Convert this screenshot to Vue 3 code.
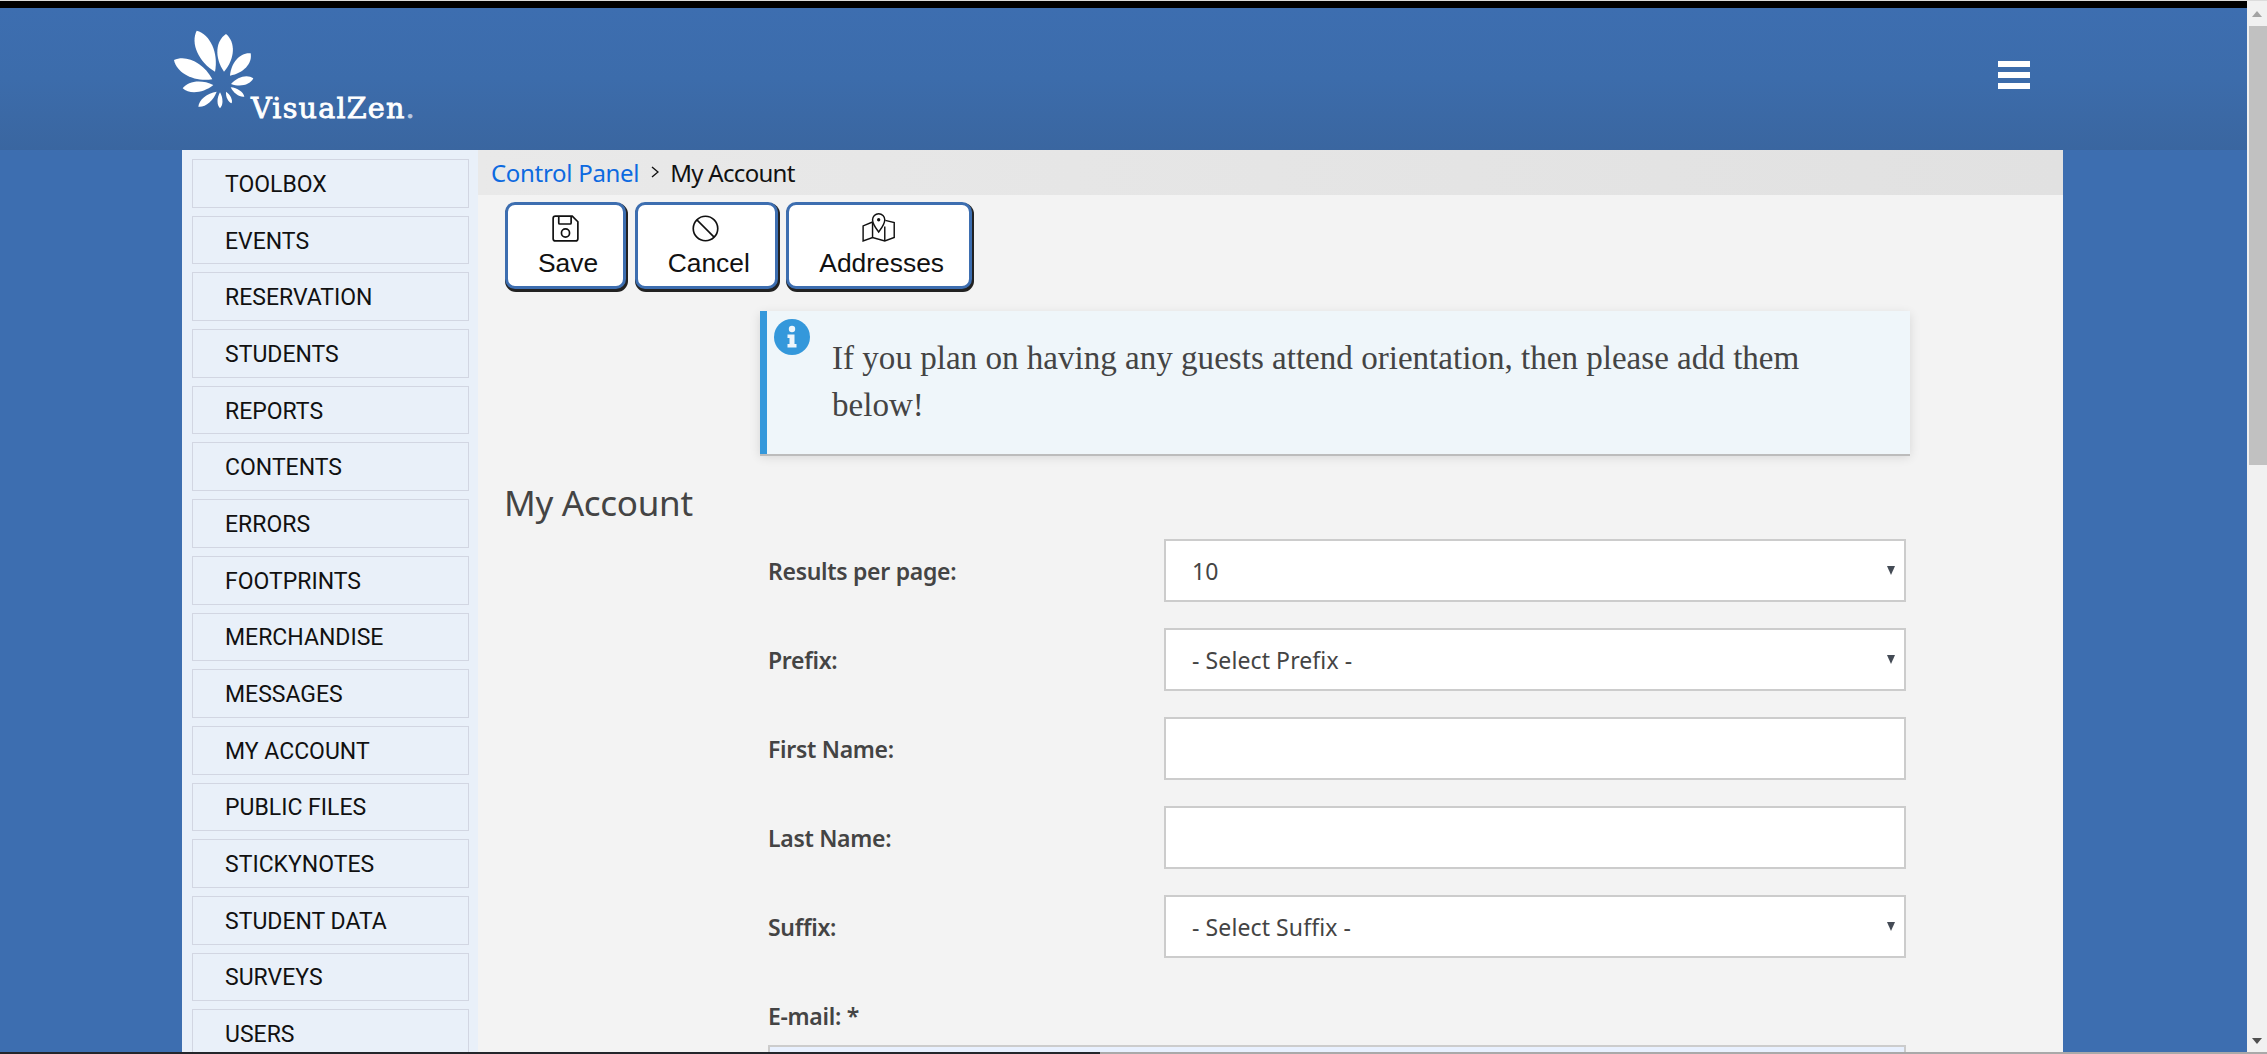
<template>
  <div class="shot">
    <div class="topline" />
    <div class="frame">
      <div class="page">
        <header class="header">
          <svg class="logo" viewBox="0 0 870 360" role="img" aria-label="VisualZen">
            <path v-for="(d, i) in leaves" :key="i" :d="d" fill="#fff" />
            <text x="303" y="325" class="logo-text">VisualZen<tspan fill="#b9c9e0" stroke="#b9c9e0">.</tspan></text>
          </svg>
          <button class="burger" aria-label="Menu">
            <span /><span /><span />
          </button>
        </header>

        <div class="body">
          <nav class="sidebar">
            <a v-for="item in menu" :key="item" class="side-item">{{ item }}</a>
          </nav>

          <main class="main">
            <div class="crumbs">
              <a class="crumb-link">Control Panel</a>
              <svg class="crumb-sep" viewBox="0 0 8 12"><path d="M1 1l6 5-6 5" fill="none" stroke="#111" stroke-width="1.4" /></svg>
              <span class="crumb-here">My Account</span>
            </div>

            <div class="toolbar">
              <button class="tool">
                <svg class="tool-icon" viewBox="0 0 24 24" fill="none" stroke="#111" stroke-width="1.5">
                  <path d="M3 1h15l5 5v15a2 2 0 0 1-2 2H3a2 2 0 0 1-2-2V3a2 2 0 0 1 2-2z" />
                  <path d="M6 1v6a1 1 0 0 0 1 1h9a1 1 0 0 0 1-1V1" />
                  <circle cx="12" cy="16" r="3.6" />
                </svg>
                <span>Save</span>
              </button>
              <button class="tool">
                <svg class="tool-icon" viewBox="0 0 26 26" fill="none" stroke="#111" stroke-width="1.6">
                  <circle cx="13" cy="13" r="11.8" />
                  <path d="M4.7 4.7l16.6 16.6" />
                </svg>
                <span>Cancel</span>
              </button>
              <button class="tool">
                <svg class="tool-icon map-icon" viewBox="0 0 30 27" fill="none" stroke="#111" stroke-width="1.3">
                  <path d="M9.500 9L1 12.500V26l8.500-3 11 3 8.500-3V9.500L21 7.500" />
                  <path d="M9.500 9v14M20.500 13v13" />
                  <path d="M9.500 9.500l5.500 2" />
                  <path d="M15 18c-3-4-5.500-7-5.500-11a5.500 5.500 0 0 1 11 0c0 4-2.500 7-5.500 11z" fill="#fff" />
                  <circle cx="15" cy="7" r="1.500" fill="#111" stroke="none" />
                </svg>
                <span>Addresses</span>
              </button>
            </div>

            <div class="notice">
              <svg class="notice-icon" viewBox="0 0 36 36">
                <circle cx="18" cy="18" r="18" fill="#3498db" />
                <circle cx="18" cy="10" r="3.200" fill="#eef6fb" />
                <path d="M13.500 15.500h7v9.500h2v3.500h-9V25h2v-6h-2z" fill="#eef6fb" />
              </svg>
              If you plan on having any guests attend orientation, then please add them below!
            </div>

            <h2 class="title">My Account</h2>

            <form class="form">
              <template v-for="row in rows" :key="row.label">
                <label class="field-label">{{ row.label }}</label>
                <div v-if="row.options" class="select-wrap">
                  <select class="control">
                    <option v-for="o in row.options" :key="o">{{ o }}</option>
                  </select>
                </div>
                <input v-else class="control" type="text" />
              </template>
              <label class="field-label email-label">E-mail: *</label>
              <input class="control email" type="text" />
            </form>
          </main>
        </div>
      </div>

      <div class="scrollbar">
        <span class="arrow" />
        <div class="thumb" />
        <span class="arrow down" />
      </div>
    </div>
    <div class="strip">
      <div class="strip-dark" />
      <div class="strip-light" />
    </div>
  </div>
</template>

<script setup>
const menu = [
  "TOOLBOX",
  "EVENTS",
  "RESERVATION",
  "STUDENTS",
  "REPORTS",
  "CONTENTS",
  "ERRORS",
  "FOOTPRINTS",
  "MERCHANDISE",
  "MESSAGES",
  "MY ACCOUNT",
  "PUBLIC FILES",
  "STICKYNOTES",
  "STUDENT DATA",
  "SURVEYS",
  "USERS",
];

const rows = [
  { label: "Results per page:", options: ["10", "25", "50"] },
  { label: "Prefix:", options: ["- Select Prefix -"] },
  { label: "First Name:" },
  { label: "Last Name:" },
  { label: "Suffix:", options: ["- Select Suffix -"] },
];

// tip x, tip y, base x, base y, half width of the leaf
const leafData = [
  [140, 62, 195, 185, 33],
  [228, 72, 222, 185, 31],
  [302, 130, 240, 197, 25],
  [310, 205, 243, 222, 17],
  [283, 260, 242, 232, 10],
  [245, 280, 228, 245, 8],
  [210, 295, 210, 247, 10],
  [145, 290, 200, 245, 15],
  [98, 235, 190, 225, 21],
  [72, 150, 187, 208, 32],
];

const leaves = leafData.map(([tx, ty, bx, by, w]) => {
  const dx = tx - bx;
  const dy = ty - by;
  const len = Math.hypot(dx, dy);
  const nx = (-dy / len) * w;
  const ny = (dx / len) * w;
  const p = (k, s) => `${bx + dx * k + nx * s} ${by + dy * k + ny * s}`;
  return `M${bx} ${by}C${p(0.35, 1)} ${p(0.8, 1)} ${tx} ${ty}C${p(0.8, -1)} ${p(0.35, -1)} ${bx} ${by}Z`;
});
</script>

<style>
html,
body {
  margin: 0;
  overflow: hidden;
}
</style>

<style scoped>
.shot {
  display: flex;
  flex-direction: column;
  width: 2267px;
  height: 1054px;
  overflow: hidden;
  font-family: "Noto Sans", "Open Sans", sans-serif;
}

.topline {
  height: 1px;
  background: #dcdcdc;
  flex: none;
}

.frame {
  display: flex;
  flex: 1;
  min-height: 0;
}

.page {
  flex: 1;
  min-width: 0;
  display: flex;
  flex-direction: column;
  background: #3d6eb0;
  border-top: 7px solid #000;
}

.header {
  flex: none;
  height: 142px;
  display: flex;
  justify-content: space-between;
  align-items: flex-start;
  padding: 2px 217px 0 150px;
  box-sizing: border-box;
  background: linear-gradient(#3d6eb0 0%, #3c6cab 50%, #3a66a0 100%);
}

.logo {
  width: 290px;
  height: 120px;
}

.logo-text {
  font-family: "DejaVu Serif", serif;
  font-size: 86px;
  font-weight: 400;
  fill: #fff;
  stroke: #fff;
  stroke-width: 2.5px;
  letter-spacing: 3.5px;
}

.burger {
  margin-top: 51px;
  padding: 0;
  border: 0;
  background: none;
  display: flex;
  flex-direction: column;
  gap: 5px;
  width: 32px;
}

.burger span {
  display: block;
  height: 6px;
  background: #fff;
}

.body {
  flex: 1;
  min-height: 0;
  display: flex;
  padding: 0 184px 0 182px;
}

.sidebar {
  width: 296px;
  flex: none;
  box-sizing: border-box;
  padding: 9px 9px 0 10px;
  background: #e9f0f9;
  display: flex;
  flex-direction: column;
  gap: 8px;
  overflow: hidden;
}

.side-item {
  flex: none;
  height: 48.7px;
  box-sizing: border-box;
  border: 1px solid #d2d6e2;
  padding: 2px 0 0 32px;
  display: flex;
  align-items: center;
  font-family: Roboto, sans-serif;
  font-size: 23px;
  color: #111;
}

.main {
  flex: 1;
  min-width: 0;
  background: #f3f3f3;
  overflow: hidden;
}

.crumbs {
  height: 45px;
  box-sizing: border-box;
  padding-left: 13px;
  display: flex;
  align-items: center;
  background: linear-gradient(90deg, #e9e9e9, #e1e1e1);
  font-size: 24px;
  color: #111;
}

.crumb-link {
  color: #0d6ae0;
  letter-spacing: -0.3px;
}

.crumb-here {
  letter-spacing: -0.7px;
}

.crumb-sep {
  width: 8px;
  height: 12px;
  margin: 0 11px 2px 12px;
}

.toolbar {
  display: flex;
  gap: 8.5px;
  padding: 7px 0 0 27px;
  height: 87px;
}

.tool {
  box-sizing: border-box;
  height: 87px;
  padding: 10px 25px 0 30px;
  border: 3px solid #3d6eb0;
  border-radius: 10px;
  background: #fff;
  box-shadow: 1px 2px 0 1px #222;
  display: flex;
  flex-direction: column;
  align-items: center;
  font-family: "Liberation Sans", Arial, sans-serif;
  font-size: 26.4px;
  color: #111;
}

.tool-icon {
  height: 27px;
  margin-right: 6px;
  margin-bottom: 6px;
  flex: none;
}

.map-icon {
  height: 30px;
  margin-top: -3px;
}

.notice {
  position: relative;
  box-sizing: border-box;
  margin: 22px 153px 0 282px;
  height: 143px;
  padding: 24px 65px 0;
  background: #eff6fa;
  border-left: 7px solid #3498db;
  box-shadow: 0 2px 0 #bcbcbc, 0 3px 10px rgba(0, 0, 0, 0.12);
  font-family: "Liberation Serif", serif;
  font-size: 33.1px;
  line-height: 47px;
  color: #444;
}

.notice-icon {
  position: absolute;
  top: 8px;
  left: 7px;
  width: 36px;
  height: 36px;
}

.title {
  margin: 24px 0 11px 26px;
  font-size: 35px;
  line-height: 50px;
  font-weight: 400;
  letter-spacing: -0.3px;
  color: #444;
}

.form {
  display: grid;
  grid-template-columns: 396px 742px;
  grid-auto-rows: 62.5px;
  row-gap: 26.5px;
  margin-left: 290px;
  align-items: center;
}

.field-label {
  padding-top: 2px;
  font-size: 23px;
  font-weight: 600;
  letter-spacing: -0.3px;
  color: #444;
}

.select-wrap {
  position: relative;
  height: 100%;
}

.select-wrap::after {
  content: "";
  position: absolute;
  right: 11px;
  top: 27px;
  border-left: 4.5px solid transparent;
  border-right: 4.5px solid transparent;
  border-top: 9px solid #444b55;
  pointer-events: none;
}

.control {
  box-sizing: border-box;
  display: block;
  width: 100%;
  height: 100%;
  margin: 0;
  padding: 2px 26px 0;
  border: 2px solid #ccc;
  border-radius: 0;
  background: #fff;
  appearance: none;
  font-family: inherit;
  font-size: 23px;
  letter-spacing: 0.1px;
  color: #444;
  outline: none;
}

.email-label {
  grid-column: 1 / -1;
}

.email {
  grid-column: 1 / -1;
  align-self: start;
  height: 62.5px;
  margin-top: -28px;
  background: #e8f0fe;
}

.scrollbar {
  position: relative;
  width: 20px;
  flex: none;
  background: #f1f1f1;
}

.thumb {
  position: absolute;
  top: 25px;
  left: 2px;
  right: 0;
  height: 439px;
  background: #c1c1c1;
}

.arrow {
  position: absolute;
  top: 10px;
  left: 5px;
  border-left: 5.5px solid transparent;
  border-right: 5.5px solid transparent;
  border-bottom: 6px solid #a3a3a3;
}

.arrow.down {
  top: auto;
  bottom: 8px;
  border-bottom: 0;
  border-top: 6px solid #505050;
}

.strip {
  flex: none;
  height: 2px;
  display: flex;
}

.strip-dark {
  width: 1100px;
  background: #24262b;
}

.strip-light {
  flex: 1;
  background: #a9a9a9;
}
</style>
